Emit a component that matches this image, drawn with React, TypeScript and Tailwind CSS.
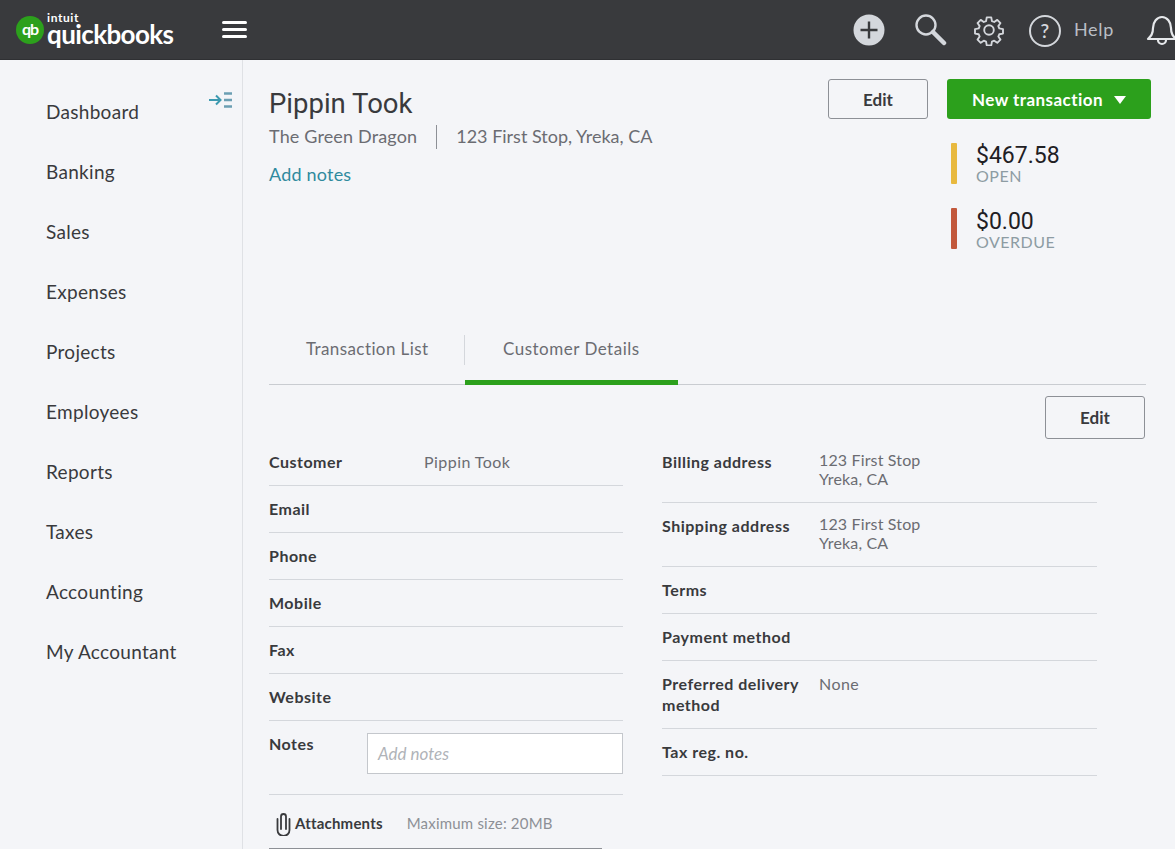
const navItems = ["Dashboard", "Banking", "Sales", "Expenses", "Projects", "Employees", "Reports", "Taxes", "Accounting", "My Accountant"];

function Logo() {
  return (
    <div className="flex items-center">
      <div className="w-[28px] h-[28px] rounded-full bg-[#2ca01c] flex items-center justify-center text-white text-[16px] font-bold leading-none tracking-[-1px] pb-[2px]">
        qb
      </div>
      <div className="ml-[3px] text-white flex flex-col mt-[-1px]">
        <span className="text-[12px] font-bold leading-[10px] tracking-[0.6px]">intuit</span>
        <span className="text-[26px] font-bold leading-[22px] tracking-[-0.6px]">quickbooks</span>
      </div>
    </div>
  );
}

function Header() {
  return (
    <header className="h-[60px] bg-[#393a3d] flex items-center pl-[16px] overflow-hidden shrink-0 border-b border-[#2f3033]">
      <Logo />
      <div className="ml-[49px] flex flex-col gap-[4px]">
        <div className="w-[25px] h-[3px] bg-white rounded-sm" />
        <div className="w-[25px] h-[3px] bg-white rounded-sm" />
        <div className="w-[25px] h-[3px] bg-white rounded-sm" />
      </div>
      <div className="ml-auto flex items-center">
        <svg width="32" height="32" viewBox="0 0 32 32" className="mr-[28px]">
          <circle cx="16" cy="16" r="15.5" fill="#d4d7dc" />
          <path d="M16 7.5v17M7.5 16h17" stroke="#393a3d" strokeWidth="2.4" />
        </svg>
        <svg width="34" height="34" viewBox="0 0 34 34" fill="none" stroke="#d4d7dc" className="mr-[26px]">
          <circle cx="13" cy="12" r="9.5" strokeWidth="2.4" />
          <path d="M20 19l11 11" strokeWidth="4.5" strokeLinecap="round" />
        </svg>
        <svg width="32" height="32" viewBox="0 0 24 24" fill="none" stroke="#d4d7dc" strokeWidth="1.4" strokeLinejoin="round" className="mr-[24px]">
          <path d="M10.3 2.5h3.4l.5 2.8 1.7.7 2.3-1.6 2.4 2.4-1.6 2.3.7 1.7 2.8.5v3.4l-2.8.5-.7 1.7 1.6 2.3-2.4 2.4-2.3-1.6-1.7.7-.5 2.8h-3.4l-.5-2.8-1.7-.7-2.3 1.6-2.4-2.4 1.6-2.3-.7-1.7-2.8-.5v-3.4l2.8-.5.7-1.7-1.6-2.3 2.4-2.4 2.3 1.6 1.7-.7z" />
          <circle cx="12" cy="12" r="3.6" />
        </svg>
        <div className="w-[32px] h-[32px] rounded-full border-[2.5px] border-[#d4d7dc] flex items-center justify-center text-[#d4d7dc] text-[19px] font-semibold leading-none mt-[2px]">
          ?
        </div>
        <span className="ml-[13px] text-[18px] tracking-[0.7px] text-[#babec5] mr-[32px]">Help</span>
        <svg width="32" height="34" viewBox="0 0 32 34" fill="none" stroke="#e6e8eb" strokeWidth="2.2" strokeLinejoin="round" className="-mr-[3px] shrink-0">
          <path d="M2 26c3-3 5-5 5-11 0-6 4-11 9-11s9 5 9 11c0 6 2 8 5 11z" />
          <path d="M12 27a4 4 0 0 0 8 0" />
        </svg>
      </div>
    </header>
  );
}

function Sidebar() {
  return (
    <aside className="w-[243px] shrink-0 border-r border-[#dfe1e5] pt-[22px] relative">
      <svg width="26" height="18" viewBox="0 0 26 18" fill="none" className="absolute left-[208px] top-[31px]">
        <path d="M1 9h11M8 4.5L12.5 9 8 13.5" stroke="#3d9ab0" strokeWidth="2" />
        <path d="M16 2.5h8M16 9h8M16 15.5h8" stroke="#6b9fb3" strokeWidth="2.6" />
      </svg>
      {navItems.map((item) => (
        <div key={item} className="h-[60px] flex items-center pl-[46px] text-[19px] tracking-[0.3px] text-[#393a3d]">
          {item}
        </div>
      ))}
    </aside>
  );
}

function DetailRow({
  label,
  value,
  h = "h-[47px]",
  valueClass = "mt-[1px] tracking-[0.45px]",
  labelW = "w-[155px]",
}: {
  label: string;
  value?: string;
  h?: string;
  valueClass?: string;
  labelW?: string;
}) {
  return (
    <div className={`${h} border-b border-[#d4d7dc] flex text-[16px] pt-[12px]`}>
      <div className={`${labelW} font-bold text-[#393a3d] leading-[21px] tracking-[0.5px] shrink-0`}>{label}</div>
      {value && <div className={`${valueClass} text-[#6b6c72] leading-[19px] whitespace-pre-line`}>{value}</div>}
    </div>
  );
}

export default function App() {
  return (
    <div className="h-[849px] overflow-hidden flex flex-col bg-[#f4f5f8] text-[#393a3d] font-['Lato','Noto_Sans',sans-serif]">
      <Header />
      <div className="flex flex-1 min-h-0">
        <Sidebar />
        <main className="flex-1 pl-[26px] pr-[29px] overflow-hidden">
          <div className="h-[274px] flex justify-between">
            <div className="pt-[25px]">
              <h1 className="text-[27.5px] font-['Roboto',sans-serif] leading-[38px] text-[#393a3d]">Pippin Took</h1>
              <div className="flex items-center text-[18px] text-[#6b6c72]">
                <span className="tracking-[0.15px]">The Green Dragon</span>
                <span className="mx-[19px] w-px h-[24px] bg-[#8d9096]" />
                <span>123 First Stop, Yreka, CA</span>
              </div>
              <div className="text-[18px] tracking-[0.2px] text-[#2f8a9e] mt-[11px]">Add notes</div>
            </div>
            <div className="pt-[19px]">
              <div className="flex gap-[19px] -mr-[5px]">
                <button className="w-[100px] h-[40px] border border-[#8d9096] rounded-[3px] text-[17px] font-bold text-[#393a3d] pt-[1px]">Edit</button>
                <button className="w-[204px] h-[40px] bg-[#2ca01c] rounded-[3px] text-[17px] tracking-[0.45px] font-bold text-white flex items-center justify-center gap-[11px] pt-[1px]">
                  New transaction
                  <span className="w-0 h-0 border-l-[6px] border-r-[6px] border-t-[8px] border-l-transparent border-r-transparent border-t-white" />
                </button>
              </div>
              <div className="ml-[123px] mt-[24px] flex flex-col gap-[24px]">
                <div className="flex h-[41px]">
                  <div className="w-[6px] bg-[#e8b93f] rounded-[1px]" />
                  <div className="ml-[19px] pt-[2px]">
                    <div className="text-[23px] font-['Roboto',sans-serif] leading-[22px] text-[#1f2024]">$467.58</div>
                    <div className="text-[16px] leading-[16px] mt-[1px] text-[#8d9ca3] tracking-[0.5px]">OPEN</div>
                  </div>
                </div>
                <div className="flex h-[41px]">
                  <div className="w-[6px] bg-[#c2583c] rounded-[1px]" />
                  <div className="ml-[19px] pt-[3px]">
                    <div className="text-[23px] font-['Roboto',sans-serif] leading-[22px] text-[#1f2024]">$0.00</div>
                    <div className="text-[16px] leading-[16px] mt-[1px] text-[#8d9ca3] tracking-[0.5px]">OVERDUE</div>
                  </div>
                </div>
              </div>
            </div>
          </div>

          <div className="h-[51px] border-b border-[#c9ccd1] flex">
            <div className="w-[195px] pt-[5px] pl-[37px] text-[17px] leading-[20px] tracking-[0.4px] text-[#6b6c72]">Transaction List</div>
            <div className="w-px h-[30px] bg-[#d4d7dc] mt-[1px]" />
            <div className="w-[213px] pt-[5px] pl-[38px] text-[17px] leading-[20px] tracking-[0.5px] text-[#6b6c72] border-b-[5px] border-[#2ca01c] h-[51px]">Customer Details</div>
          </div>

          <div className="flex justify-end pr-px mt-[11px]">
            <button className="w-[100px] h-[43px] border border-[#8d9096] rounded-[3px] text-[17px] font-bold text-[#393a3d]">Edit</button>
          </div>

          <div className="flex">
            <div className="w-[354px] shrink-0">
              <DetailRow label="Customer" value="Pippin Took" />
              <DetailRow label="Email" />
              <DetailRow label="Phone" />
              <DetailRow label="Mobile" />
              <DetailRow label="Fax" />
              <DetailRow label="Website" />
              <div className="h-[74px] border-b border-[#d4d7dc] flex text-[16px] pt-[12px]">
                <div className="w-[98px] font-bold text-[#393a3d] leading-[21px] tracking-[0.5px] shrink-0">Notes</div>
                <div className="w-[256px] h-[41px] bg-white border border-[#c4c7cc] flex items-center pl-[10px] italic text-[17px] text-[#b0b3b8]">Add notes</div>
              </div>
              <div className="h-[54px] w-[333px] border-b border-[#8d9096] flex items-center text-[15px] tracking-[0.2px] pt-[3px]">
                <svg width="20" height="26" viewBox="0 0 20 26" fill="none" stroke="#393a3d" strokeWidth="1.8" strokeLinecap="round" className="ml-[5px] mr-[1px]">
                  <path d="M7 19V6.5a2.5 2.5 0 0 1 5 0V19" />
                  <path d="M3.5 9v11a6 6 0 0 0 12 0V9" />
                </svg>
                <span className="font-bold text-[#393a3d]">Attachments</span>
                <span className="ml-[24px] text-[#8d9096]">Maximum size: 20MB</span>
              </div>
            </div>
            <div className="w-[435px] ml-[39px] shrink-0">
              <DetailRow label="Billing address" value={"123 First Stop\nYreka, CA"} h="h-[64px]" valueClass="-mt-[1px] tracking-[0.15px]" labelW="w-[157px]" />
              <DetailRow label="Shipping address" value={"123 First Stop\nYreka, CA"} h="h-[64px]" valueClass="-mt-[1px] tracking-[0.15px]" labelW="w-[157px]" />
              <DetailRow label="Terms" />
              <DetailRow label="Payment method" />
              <DetailRow label={"Preferred delivery method"} value="None" h="h-[68px]" labelW="w-[157px]" />
              <DetailRow label="Tax reg. no." />
            </div>
          </div>
        </main>
      </div>
    </div>
  );
}
